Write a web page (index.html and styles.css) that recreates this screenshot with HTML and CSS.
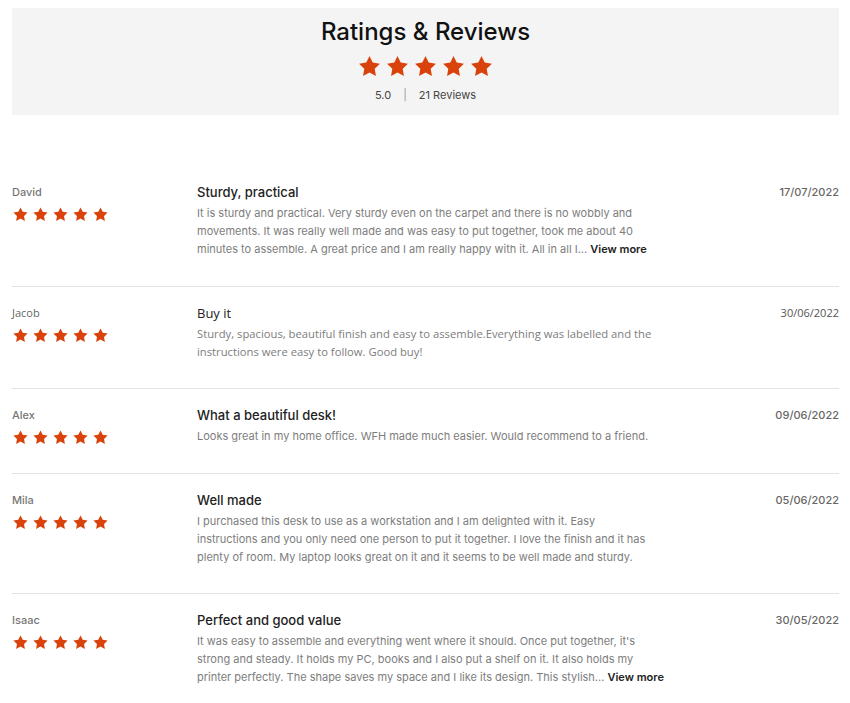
FILE: index.html
```html
<!DOCTYPE html>
<html lang="en">
<head>
<meta charset="utf-8">
<title>Ratings &amp; Reviews</title>
<link rel="stylesheet" href="styles.css">
</head>
<body>
<svg width="0" height="0" class="defs" aria-hidden="true">
  <defs>
    <symbol id="star" viewBox="0 0 24 24"><path d="M12 2l3.09 6.26L22 9.27l-5 4.87 1.18 6.88L12 17.77l-6.18 3.25L7 14.14 2 9.27l6.91-1.01L12 2z"/></symbol>
  </defs>
</svg>
<div class="page">
  <section class="summary">
    <h1 class="summary-title">Ratings &amp; Reviews</h1>
    <div class="stars stars-lg">
      <svg><use href="#star"/></svg><svg><use href="#star"/></svg><svg><use href="#star"/></svg><svg><use href="#star"/></svg><svg><use href="#star"/></svg>
    </div>
    <div class="summary-meta"><span>5.0</span><span class="sep">|</span><span>21 Reviews</span></div>
  </section>

  <div class="reviews">
    <article class="review">
      <div class="author">
        <div class="name">David</div>
        <div class="stars stars-sm"><svg><use href="#star"/></svg><svg><use href="#star"/></svg><svg><use href="#star"/></svg><svg><use href="#star"/></svg><svg><use href="#star"/></svg></div>
      </div>
      <div class="content">
        <h2 class="title">Sturdy, practical</h2>
        <p class="body">It is sturdy and practical. Very sturdy even on the carpet and there is no wobbly and<br>movements. It was really well made and was easy to put together, took me about 40<br>minutes to assemble. A great price and I am really happy with it. All in all I... <a class="more">View more</a></p>
      </div>
      <div class="date">17/07/2022</div>
    </article>

    <article class="review review-alt">
      <div class="author">
        <div class="name">Jacob</div>
        <div class="stars stars-sm"><svg><use href="#star"/></svg><svg><use href="#star"/></svg><svg><use href="#star"/></svg><svg><use href="#star"/></svg><svg><use href="#star"/></svg></div>
      </div>
      <div class="content">
        <h2 class="title">Buy it</h2>
        <p class="body">Sturdy, spacious, beautiful finish and easy to assemble.Everything was labelled and the<br>instructions were easy to follow. Good buy!</p>
      </div>
      <div class="date">30/06/2022</div>
    </article>

    <article class="review">
      <div class="author">
        <div class="name">Alex</div>
        <div class="stars stars-sm"><svg><use href="#star"/></svg><svg><use href="#star"/></svg><svg><use href="#star"/></svg><svg><use href="#star"/></svg><svg><use href="#star"/></svg></div>
      </div>
      <div class="content">
        <h2 class="title">What a beautiful desk!</h2>
        <p class="body">Looks great in my home office. WFH made much easier. Would recommend to a friend.</p>
      </div>
      <div class="date">09/06/2022</div>
    </article>

    <article class="review">
      <div class="author">
        <div class="name">Mila</div>
        <div class="stars stars-sm"><svg><use href="#star"/></svg><svg><use href="#star"/></svg><svg><use href="#star"/></svg><svg><use href="#star"/></svg><svg><use href="#star"/></svg></div>
      </div>
      <div class="content">
        <h2 class="title">Well made</h2>
        <p class="body">I purchased this desk to use as a workstation and I am delighted with it. Easy<br>instructions and you only need one person to put it together. I love the finish and it has<br>plenty of room. My laptop looks great on it and it seems to be well made and sturdy.</p>
      </div>
      <div class="date">05/06/2022</div>
    </article>

    <article class="review">
      <div class="author">
        <div class="name">Isaac</div>
        <div class="stars stars-sm"><svg><use href="#star"/></svg><svg><use href="#star"/></svg><svg><use href="#star"/></svg><svg><use href="#star"/></svg><svg><use href="#star"/></svg></div>
      </div>
      <div class="content">
        <h2 class="title">Perfect and good value</h2>
        <p class="body">It was easy to assemble and everything went where it should. Once put together, it's<br>strong and steady. It holds my PC, books and I also put a shelf on it. It also holds my<br>printer perfectly. The shape saves my space and I like its design. This stylish... <a class="more">View more</a></p>
      </div>
      <div class="date">30/05/2022</div>
    </article>
  </div>
</div>
</body>
</html>
```
FILE: styles.css
```css
* { box-sizing: border-box; }

body {
  margin: 0;
  background: #ffffff;
  font-family: Inter, "Open Sans", sans-serif;
  color: #222222;
}

.defs { position: absolute; }

.page {
  padding: 8px 11px 0 12px;
}

/* Summary header */
.summary {
  background: #f4f4f4;
  padding: 9px 0 12px;
  display: flex;
  flex-direction: column;
  align-items: center;
}

.summary-title {
  margin: 0;
  font-size: 24px;
  line-height: 30px;
  font-weight: 500;
  color: #111111;
}

.stars {
  display: flex;
  fill: #d9420b;
}

.stars-lg {
  gap: 3px;
  margin-top: 7px;
}

.stars-lg svg {
  width: 25px;
  height: 25px;
}

.summary-meta {
  margin-top: 8px;
  display: flex;
  gap: 12px;
  font-size: 11px;
  line-height: 16px;
  color: #444444;
}

.summary-meta .sep { color: #999999; }

/* Reviews */
.reviews {
  margin-top: 52px;
}

.review {
  display: grid;
  grid-template-columns: 185px 470px 1fr;
  padding: 17px 0 27px;
  border-bottom: 1px solid #e3e3e3;
}

.review:first-child { padding-top: 16px; padding-bottom: 28px; }

.review:last-child { border-bottom: none; }

.name {
  font-size: 11px;
  line-height: 18px;
  font-weight: 500;
  color: #777777;
}

.stars-sm {
  gap: 3px;
  margin-top: 5px;
}

.stars-sm svg {
  width: 17px;
  height: 17px;
}

.title {
  margin: 0 0 3px;
  font-size: 13px;
  line-height: 18px;
  font-weight: 500;
  color: #222222;
}

.body {
  margin: 0;
  font-size: 11px;
  line-height: 18px;
  color: #7d7d7d;
  white-space: nowrap;
}

.more {
  color: #222222;
  font-weight: 600;
  cursor: pointer;
}

.date {
  text-align: right;
  font-size: 11px;
  line-height: 18px;
  font-weight: 500;
  color: #666666;
}

/* Second review rendered in the fallback face */
.review-alt .name,
.review-alt .title,
.review-alt .body,
.review-alt .date {
  font-family: "Open Sans", sans-serif;
  font-weight: 400;
}

.review-alt .name { color: #666666; }
.review-alt .title { font-size: 13px; color: #222222; }
.review-alt .body { font-size: 11.25px; }
.review-alt .date { font-size: 11px; color: #555555; }
```
